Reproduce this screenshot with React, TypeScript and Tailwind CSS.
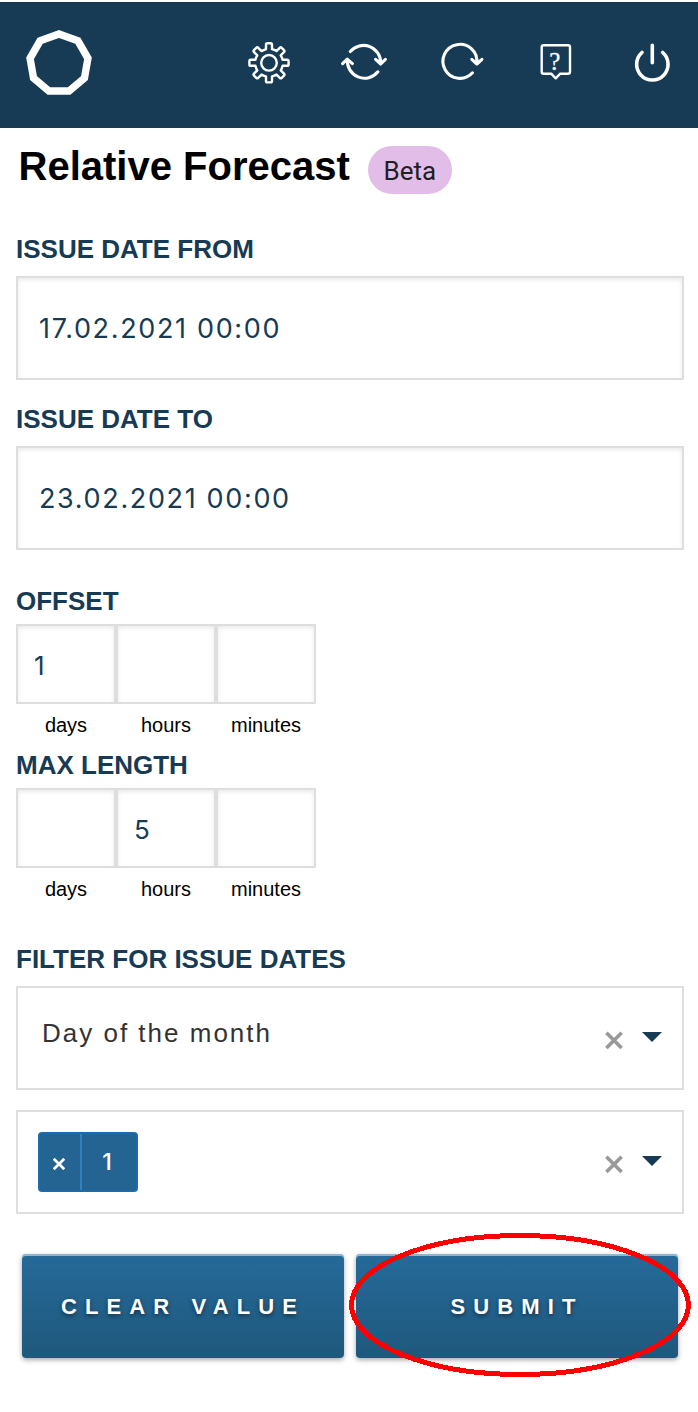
import type { ReactNode } from "react";

function polar(cx: number, cy: number, r: number, deg: number, side = 0) {
  const a = (deg * Math.PI) / 180;
  const x = cx + r * Math.sin(a) + side * Math.cos(a);
  const y = cy - r * Math.cos(a) + side * Math.sin(a);
  return `${x.toFixed(2)} ${y.toFixed(2)}`;
}

const gearPath =
  Array.from({ length: 8 }, (_, i) => {
    const a = i * 45;
    const p = (r: number, s: number) => polar(25, 24.8, r, a, s);
    return `${i ? "A13.9 13.9 0 0 1 " : "M"}${p(13.6, -3)} L${p(18.2, -3)} Q${p(19.6, -3)} ${p(19.6, -1.6)} L${p(19.6, 1.6)} Q${p(19.6, 3)} ${p(18.2, 3)} L${p(13.6, 3)}`;
  }).join(" ") + "Z";

const logoPoints = Array.from({ length: 9 }, (_, i) => polar(34, 34.4, 29.4, i * 40)).join(" ");

function Icon({ width = 3.1, children }: { width?: number; children: ReactNode }) {
  return (
    <svg
      className="h-12 w-12 overflow-visible"
      viewBox="0 0 48 48"
      fill="none"
      stroke="white"
      strokeWidth={width}
      strokeLinecap="round"
      strokeLinejoin="round"
    >
      {children}
    </svg>
  );
}

function Header() {
  return (
    <header className="flex h-[126px] items-start justify-between bg-[#173b54] pr-[22px] pl-[25px]">
      <svg className="mt-[27px] h-[68px] w-[68px]" viewBox="0 0 68 68">
        <polygon points={logoPoints} fill="none" stroke="white" strokeWidth="7.4" />
      </svg>
      <nav className="mt-9 flex gap-12">
        <Icon width={2.4}>
          <path d={gearPath} />
          <circle cx="25" cy="24.8" r="7.8" />
        </Icon>
        <Icon>
          <path d="M10.3 13.6A17.2 17.2 0 0 1 40.7 25.5M35.6 21.4l5.1 4.6 4.7-4.6" />
          <path d="M37.9 33.8A17.2 17.2 0 0 1 7.4 21.4M2.6 25.6 7.2 21.2l5.2 4.4" />
        </Icon>
        <Icon>
          <path d="M36.5 34.8A17 17 0 1 1 40.8 25.5M35.8 21.4l5.1 4.6 5-4.6" />
        </Icon>
        <Icon width={2.4}>
          <path d="M11.7 7.2H36a2 2 0 0 1 2 2v24.5a2 2 0 0 1-2 2h-7.8l-4.5 4.6-4.5-4.6h-7.5a2 2 0 0 1-2-2V9.2a2 2 0 0 1 2-2Z" />
          <text
            x="22.8"
            y="31.5"
            textAnchor="middle"
            fill="white"
            stroke="white"
            strokeWidth="0.3"
            className="font-['Liberation_Serif',serif] text-[25px]"
          >
            ?
          </text>
        </Icon>
        <Icon width={3.6}>
          <path d="M14 14.5A15.7 15.7 0 1 0 34.7 14.5M24.3 7.3v17.4" />
        </Icon>
      </nav>
    </header>
  );
}

function Label({ children }: { children: ReactNode }) {
  return <div className="text-[26px] leading-8 font-bold text-[#173b54]">{children}</div>;
}

function DateInput({ value }: { value: string }) {
  return (
    <div className="flex h-[104px] items-center border-2 border-[#dedede] pt-0.5 pl-[21px] font-['Inter',sans-serif] text-[27px] tracking-[1.65px] text-[#173b54] shadow-[inset_0_2px_4px_rgba(0,0,0,0.09)]">
      {value}
    </div>
  );
}

function Duration({ values }: { values: string[] }) {
  const units = ["days", "hours", "minutes"];
  return (
    <div className="flex">
      {units.map((unit, i) => (
        <div key={unit} className="w-[100px]">
          <div className="flex h-20 items-center border-2 border-[#dedede] pt-0.5 pl-4 font-['Inter',sans-serif] text-[26px] text-[#173b54] shadow-[inset_0_2px_4px_rgba(0,0,0,0.09)]">
            {values[i]}
          </div>
          <div className="pt-[7px] pb-px text-center text-[20px] leading-7 text-black">{unit}</div>
        </div>
      ))}
    </div>
  );
}

function Select({ children }: { children: ReactNode }) {
  return (
    <div className="flex h-[104px] items-start justify-between border-2 border-[#dedede] pr-5">
      {children}
      <div className="mt-[43px] flex items-start gap-[19px]">
        <svg className="h-[19px] w-[18px]" viewBox="0 0 18 19" stroke="#999" strokeWidth="3.6">
          <path d="M1.4 1.8 16.6 17M16.6 1.8 1.4 17" />
        </svg>
        <svg className="mt-px h-[10px] w-5" viewBox="0 0 20 10" fill="#173b54">
          <path d="M0 0h20L10 10Z" />
        </svg>
      </div>
    </div>
  );
}

function Button({ children }: { children: ReactNode }) {
  return (
    <button className="flex h-[104px] w-[322px] items-center justify-center rounded-[4px] bg-linear-to-b from-[#256a9a] to-[#1f587c] text-[22px] font-bold tracking-[8.1px] text-white shadow-[inset_0_2px_0_rgba(255,255,255,0.5),0_2px_5px_rgba(0,0,0,0.35)] [text-shadow:0_2px_4px_rgba(0,0,0,0.5)]">
      {children}
    </button>
  );
}

export default function App() {
  return (
    <div className="relative h-[1412px] w-[698px] overflow-hidden bg-white pt-0.5 font-['Liberation_Sans',sans-serif]">
      <Header />
      <main className="pr-[14px] pl-4">
        <div className="flex h-[105px] items-start pl-[2.5px]">
          <h1 className="mt-3.5 text-[40px] leading-[48px] font-bold whitespace-nowrap text-black">
            Relative Forecast
          </h1>
          <span className="mt-[18px] ml-[18.5px] flex h-12 w-[84px] items-center justify-center rounded-full bg-[#e1bde8] pt-0.5 pr-px font-['Roboto',sans-serif] text-[26px] text-[#1f1f1f]">
            Beta
          </span>
        </div>

        <Label>ISSUE DATE FROM</Label>
        <div className="mt-[11px]">
          <DateInput value="17.02.2021 00:00" />
        </div>
        <div className="mt-[23px]">
          <Label>ISSUE DATE TO</Label>
        </div>
        <div className="mt-[11px]">
          <DateInput value="23.02.2021 00:00" />
        </div>

        <div className="mt-[35px]">
          <Label>OFFSET</Label>
        </div>
        <div className="mt-[7px]">
          <Duration values={["1", "", ""]} />
        </div>
        <div className="mt-[9px]">
          <Label>MAX LENGTH</Label>
        </div>
        <div className="mt-[7px]">
          <Duration values={["", "5", ""]} />
        </div>

        <div className="mt-[39px]">
          <Label>FILTER FOR ISSUE DATES</Label>
        </div>
        <div className="mt-[11px] flex flex-col gap-5">
          <Select>
            <span className="mt-[29px] ml-6 text-[26px] leading-8 tracking-[2px] text-[#333]">
              Day of the month
            </span>
          </Select>
          <Select>
            <span className="mt-5 ml-5 flex h-[60px] w-[100px] rounded-[4px] border-2 border-[#1c6bad] bg-[#246492] text-white">
              <span className="flex w-[42px] items-center justify-center border-r-2 border-[#2f82bd] pr-0.5">
                <svg className="mt-1 h-3 w-3" viewBox="0 0 12 12" stroke="white" strokeWidth="2.7">
                  <path d="M.8.8l10.4 10.4M11.2.8.8 11.2" />
                </svg>
              </span>
              <span className="flex flex-1 items-center justify-center pr-1 font-['Inter',sans-serif] text-[23px] font-medium">
                1
              </span>
            </span>
          </Select>
        </div>

        <div className="mt-10 flex gap-3 pl-1.5">
          <Button>CLEAR VALUE</Button>
          <Button>SUBMIT</Button>
        </div>
      </main>
      <svg
        className="pointer-events-none absolute top-[1232px] left-[348px] h-[146px] w-[344px]"
        viewBox="0 0 344 146"
      >
        <ellipse
          cx="172"
          cy="73"
          rx="168.5"
          ry="69.5"
          fill="none"
          stroke="red"
          strokeWidth="5"
          shapeRendering="crispEdges"
        />
      </svg>
    </div>
  );
}
